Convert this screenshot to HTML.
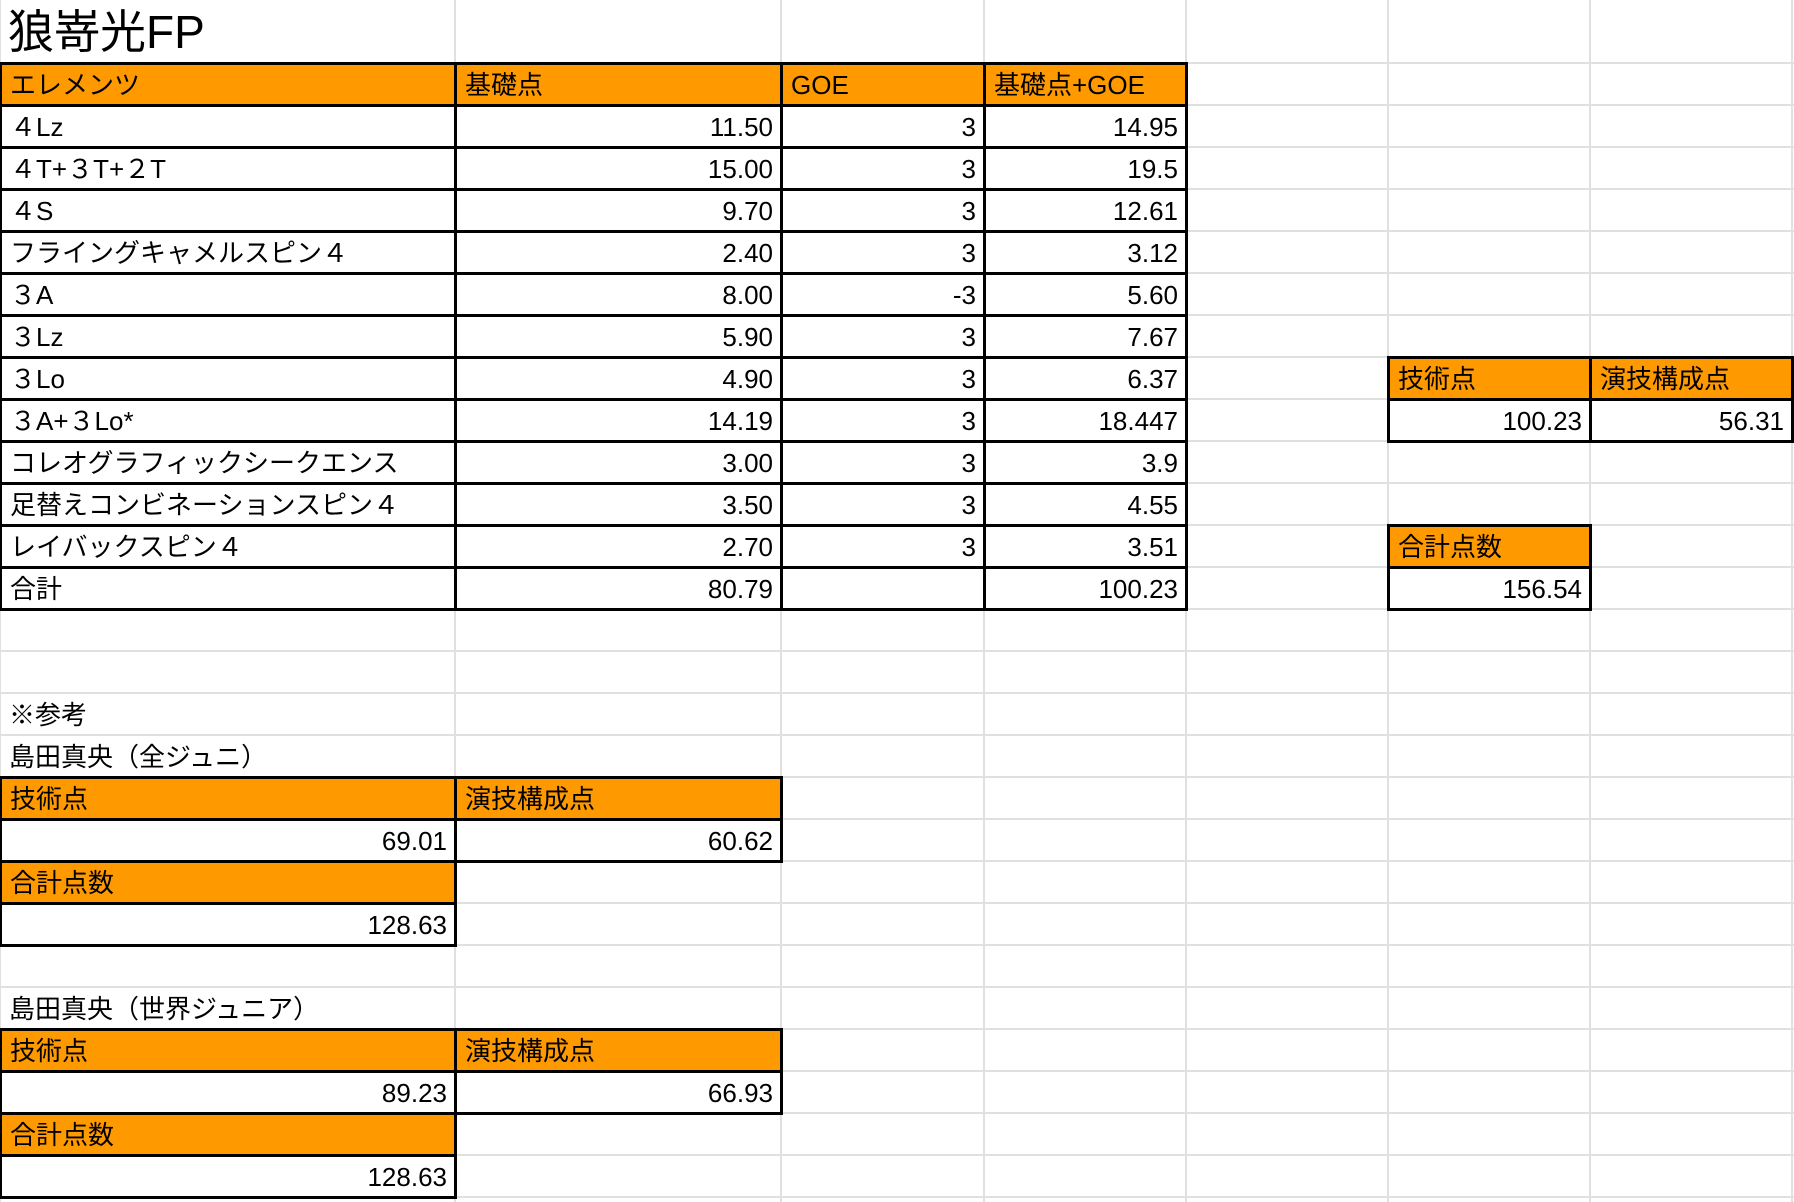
<!DOCTYPE html>
<html><head><meta charset="utf-8"><style>
body{margin:0;width:1794px;height:1202px;overflow:hidden;background:#fff;font-family:"Liberation Sans","Noto Sans CJK JP",sans-serif;}
.g{position:absolute;background:#e0e0e0}
.c{position:absolute;box-sizing:border-box;border:3px solid #000;height:45px;line-height:41px;font-size:26px;padding:0 7px 0 8px;white-space:nowrap;overflow:hidden;color:#000}
.o{background:#ff9900}
.w{background:#fff}
.r{text-align:right}
.t{position:absolute;font-size:26px;line-height:44px;left:9px;white-space:nowrap}
</style></head><body>
<div id="grid"></div>
<div id="cells"></div>
<div class="t" style="top:0;left:8px;font-size:46px;line-height:64px">狼嵜光FP</div>
<script>
var cols=[0,455,781,984,1186,1388,1590,1792];
var g='';
cols.forEach(function(x){g+='<div class="g" style="left:'+(x-1)+'px;top:0;width:2px;height:1202px"></div>';});
for(var y=63;y<1202;y+=42)g+='<div class="g" style="left:0;top:'+(y-1)+'px;width:1794px;height:2px"></div>';
document.getElementById('grid').innerHTML=g;
function ry(r){return 63+42*(r-1);}
var h='';
function cell(c1,c2,r,txt,cls){
 var x1=cols[c1],x2=cols[c2],y=ry(r);
 h+='<div class="c '+cls+'" style="left:'+(x1-1)+'px;top:'+(y-1)+'px;width:'+(x2-x1+3)+'px">'+txt+'</div>';
}
var hd=['エレメンツ','基礎点','GOE','基礎点+GOE'];
for(var i=0;i<4;i++)cell(i,i+1,1,hd[i],'o');
var rows=[
['４Lz','11.50','3','14.95'],
['４T+３T+２T','15.00','3','19.5'],
['４S','9.70','3','12.61'],
['フライングキャメルスピン４','2.40','3','3.12'],
['３A','8.00','-3','5.60'],
['３Lz','5.90','3','7.67'],
['３Lo','4.90','3','6.37'],
['３A+３Lo*','14.19','3','18.447'],
['コレオグラフィックシークエンス','3.00','3','3.9'],
['足替えコンビネーションスピン４','3.50','3','4.55'],
['レイバックスピン４','2.70','3','3.51'],
['合計','80.79','','100.23']];
rows.forEach(function(rw,k){for(var i=0;i<4;i++)cell(i,i+1,k+2,rw[i],i?'w r':'w');});
cell(5,6,8,'技術点','o');cell(6,7,8,'演技構成点','o');
cell(5,6,9,'100.23','w r');cell(6,7,9,'56.31','w r');
cell(5,6,12,'合計点数','o');cell(5,6,13,'156.54','w r');
function blk(r,a,b,c){
 cell(0,1,r,'技術点','o');cell(1,2,r,'演技構成点','o');
 cell(0,1,r+1,a,'w r');cell(1,2,r+1,b,'w r');
 cell(0,1,r+2,'合計点数','o');cell(0,1,r+3,c,'w r');
}
blk(18,'69.01','60.62','128.63');
blk(24,'89.23','66.93','128.63');
h+='<div class="t" style="top:'+ry(16)+'px">※参考</div>';
h+='<div class="t" style="top:'+ry(17)+'px">島田真央（全ジュニ）</div>';
h+='<div class="t" style="top:'+ry(23)+'px">島田真央（世界ジュニア）</div>';
document.getElementById('cells').innerHTML=h;
</script>
</body></html>
